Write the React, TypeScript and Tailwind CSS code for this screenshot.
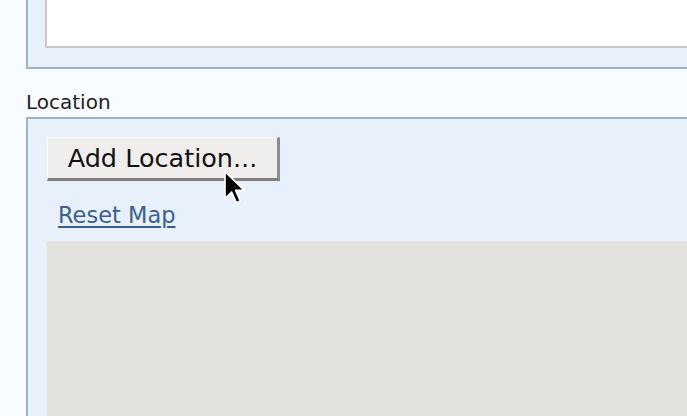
import React from 'react';

const font = "font-['DejaVu_Sans','Liberation_Sans',sans-serif]";

const Cursor: React.FC = () => (
  <svg
    className="absolute left-[223px] top-[170px]"
    width="24"
    height="35"
    viewBox="-1 -1 14 21"
  >
    <path
      d="M0 0 L0 16 L4 12.2 L6.8 18.6 L9.2 17.6 L6.4 11.2 L11.6 11.2 Z"
      fill="#000"
      stroke="#fff"
      strokeWidth="1"
      strokeLinejoin="round"
    />
  </svg>
);

const App: React.FC = () => {
  return (
    <div className={`relative h-[416px] w-full overflow-hidden bg-[#f8fbff] pl-[26px] ${font}`}>
      {/* panel above, cut off by the top of the window */}
      <div className="h-[69px] border-b-2 border-l-2 border-[#9eb4c0] bg-[#e8f0fc] pl-[17px]">
        <div className="h-[48px] border-b-2 border-l-2 border-[#c8c9c9] bg-white" />
      </div>

      <div className="mt-[23px] mb-[5px] text-[20px] leading-[20px] text-[#1e1e1e]">Location</div>

      <div className="flex h-[300px] flex-col border-l-2 border-t-2 border-[#9eb4c0] bg-[#e8f0fc] pl-[19px] pt-[18px]">
        <button className="flex h-[44px] w-[233px] items-center justify-center border-l border-t border-b-[3px] border-r-[3px] border-l-white border-t-white border-b-[#7e7e7e] border-r-[#8c8c8c] bg-[#efeeec] text-[25.5px] text-[#111]">
          Add Location...
        </button>
        <a
          href="#"
          className="mt-[21px] ml-[11px] self-start text-[22.5px] leading-[26px] text-[#3b5f8e] underline decoration-2 underline-offset-[3px]"
        >
          Reset Map
        </a>
        <div className="mt-[13px] flex-1 bg-[#e3e1dd]" />
      </div>

      <Cursor />
    </div>
  );
};

export default App;
